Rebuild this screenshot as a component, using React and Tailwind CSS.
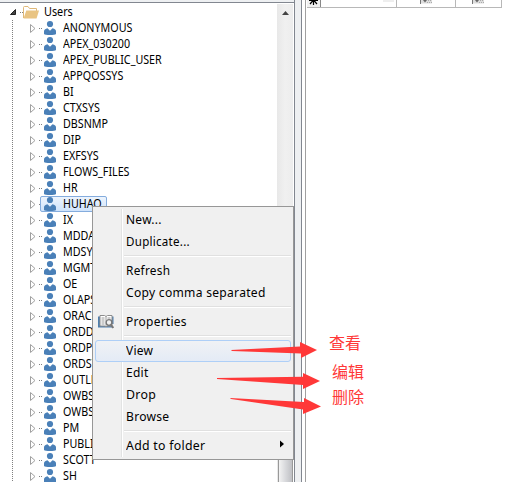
const USERS = [
  'ANONYMOUS', 'APEX_030200', 'APEX_PUBLIC_USER', 'APPQOSSYS', 'BI', 'CTXSYS', 'DBSNMP', 'DIP',
  'EXFSYS', 'FLOWS_FILES', 'HR', 'HUHAO', 'IX', 'MDDATA', 'MDSYS', 'MGMT_VIEW', 'OE', 'OLAPSYS',
  'ORACLE_OCM', 'ORDDATA', 'ORDPLUGINS', 'ORDSYS', 'OUTLN', 'OWBSYS', 'OWBSYS_AUDIT', 'PM',
  'PUBLIC', 'SCOTT', 'SH',
];

const MENU = [
  [['New...', 'scale-x-[.92]'], ['Duplicate...', 'scale-x-[.89]']],
  [['Refresh', 'scale-x-[.91]'], ['Copy comma separated', 'scale-x-[.93]']],
  [['Properties', 'scale-x-[.92]']],
  [['View', 'scale-x-[.92]'], ['Edit', 'scale-x-[.92]'], ['Drop', 'scale-x-[.95]'], ['Browse', 'scale-x-[.93]']],
  [['Add to folder', 'scale-x-[.945]']],
];

function UserIcon() {
  return (
    <svg className="block h-4 w-3 shrink-0" viewBox="0 0 12 16" fill="#4a80b8">
      <circle cx="6" cy="4" r="3.1" />
      <path d="M0 14V11.500Q0 9 3.500 8.300L6 10.800L8.500 8.300Q12 9 12 11.500V14Q11 15 6 15T0 14Z" />
    </svg>
  );
}

function UserRow({ name }) {
  const selected = name === 'HUHAO';
  return (
    <div className="flex h-4 items-center pl-[30px]">
      <svg className="block h-[9px] w-[6px] shrink-0" viewBox="0 0 6 9">
        <path d="M.5.5V8.5L5 4.5Z" fill="#fff" stroke="#a0a0a0" />
      </svg>
      <div className="ml-[3px] h-px w-[3px] shrink-0 bg-[repeating-linear-gradient(90deg,#808080_0_1px,transparent_1px_2px)]" />
      <div
        className={
          selected
            ? '-ml-[2px] flex h-4 w-[67px] items-center rounded-[2px] border border-[#84acdd] bg-linear-to-b from-[#edf4fd] to-[#cfe3fb] pl-[3px]'
            : 'ml-[2px] flex h-4 items-center'
        }
      >
        <UserIcon />
        <span className="ml-[7px] origin-left scale-x-[.893] whitespace-nowrap text-[12px] leading-4">{name}</span>
      </div>
    </div>
  );
}

function BookIcon() {
  return (
    <svg className="block h-[14px] w-4" viewBox="0 0 16 14">
      <path d="M0 1.500H2V11H7L8 12L9 11H13V1.500H15.500V9H14V12.500H0Z" fill="#4f7fae" />
      <path d="M2 .5H6.500L8 1.500L9.500 .5H14V11H9L8 12L7 11H2Z" fill="#fff" stroke="#8c8c8c" />
      <path d="M8 1.500V11M3.500 3H6.500M3.500 5H6.500M3.500 7H6.500M3.500 9H6.500M9.500 3H12.500" stroke="#999" />
      <circle cx="11" cy="7.500" r="2.800" fill="#f2f2f2" stroke="#777" strokeWidth="1.300" />
      <path d="M12.700 9.500L15.300 13" stroke="#777" strokeWidth="2" />
    </svg>
  );
}

function MenuItem({ label, width }) {
  return (
    <div
      className={
        label === 'View'
          ? 'flex h-[22px] items-center rounded-[3px] border border-[#aecff7] bg-linear-to-b from-[#f0f2f5] to-[#e4ebf6] pl-px'
          : 'flex h-[22px] items-center pl-[2px]'
      }
    >
      <div className="w-[29px] shrink-0 pl-[1px]">{label === 'Properties' && <BookIcon />}</div>
      <span className={`-mt-[2px] origin-left whitespace-nowrap text-[13px] leading-5 tracking-[0.3px] ${width}`}>{label}</span>
      {label === 'Add to folder' && (
        <svg className="-mt-[5px] mr-[7px] ml-auto block h-[8px] w-[4px]" viewBox="0 0 4 7">
          <path d="M0 0L4 3.500L0 7Z" />
        </svg>
      )}
    </div>
  );
}

function ContextMenu() {
  return (
    <div className="absolute top-[206px] left-[92px] h-[254px] w-[202px] border border-[#979797] bg-[#f0f0f0] p-[2px] shadow-[1px_0_0_#828790]">
      <div className="absolute top-[2px] left-[28px] h-[248px] w-[2px] border-r border-l border-r-white border-l-[#e2e3e3]" />
      <div className="relative">
        {MENU.map((group, i) => (
          <div key={group[0][0]}>
            {i > 0 && <div className="mt-[2px] mb-[3px] ml-[29px] h-[2px] border-t border-b border-t-[#e0e0e0] border-b-white" />}
            {group.map(([label, width]) => <MenuItem key={label} label={label} width={width} />)}
          </div>
        ))}
      </div>
    </div>
  );
}

function GridHeader() {
  return (
    <div className="flex h-2 w-[195px] border-b border-[#b8b8b8]">
      <div className="w-[14px] border-r border-[#888] bg-[#f0f0f0]">
        <svg className="block h-[7px] w-[13px]" viewBox="0 0 13 7">
          <path d="M2 .5H11M6.500 0V5M6.500 0L3 4M6.500 0L10 4" stroke="#000" strokeWidth="1.200" fill="none" />
        </svg>
      </div>
      <div className="flex w-[76px] justify-end border-r border-[#b8b8b8] pr-[2px]">
        <div className="h-[2px] w-[11px] bg-[#eee]" />
      </div>
      <div className="w-[59px] border-r border-[#b8b8b8] pl-[23px]"><FlagCell /></div>
      <div className="w-[46px] border-r border-[#b8b8b8] pl-[16px]"><FlagCell /></div>
    </div>
  );
}

function FlagCell() {
  return (
    <svg className="block h-1 w-3" viewBox="0 0 12 4">
      <path d="M0 0H12V3.500H0Z" fill="#ddd" />
      <path d="M.5 0V4" stroke="#777" />
      <path d="M3 0H7L5 2.500Z" fill="#666" />
      <path d="M8 .5H12M7 2.500H12" stroke="#aaa" strokeDasharray="1 1" />
    </svg>
  );
}

export default function App() {
  return (
    <div className="relative flex h-[482px] w-[509px] overflow-hidden bg-white font-['Noto_Sans','Noto_Sans_CJK_SC',sans-serif] text-black">
      <div className="flex h-full w-[295px] shrink-0 flex-col border-r border-[#828790]">
        <div className="h-[3px] shrink-0 border-b border-[#828790] bg-[#eef0f2]" />
        <div className="flex min-h-0 flex-1">
          <div className="w-[277px] shrink-0 pt-px">
            <div className="flex h-4 items-center pl-[10px]">
              <svg className="block h-[6px] w-[6px]" viewBox="0 0 6 6"><path d="M5.500 .5V5.500H.5Z" fill="#444" stroke="#222" /></svg>
              <div className="ml-[4px] h-px w-[3px] bg-[repeating-linear-gradient(90deg,#808080_0_1px,transparent_1px_2px)]" />
              <svg className="block h-[13px] w-4" viewBox="0 0 16 13">
                <path d="M.5 12V1.500Q.5 .5 1.500 .5H5L6.500 2.500H13.500V5" fill="#fff" stroke="#dfb878" />
                <path d="M3.300 4.500H16L13.500 12.500H.5Z" fill="#e9c483" />
              </svg>
              <span className="ml-[5px] origin-left scale-x-[.9] text-[12px] leading-4">Users</span>
            </div>
            <div className="relative">
              <div className="absolute top-0 left-[12px] h-[462px] w-px bg-[repeating-linear-gradient(#808080_0_1px,transparent_1px_2px)]" />
              {USERS.map((name) => <UserRow key={name} name={name} />)}
            </div>
          </div>
          <div className="mt-px flex w-4 flex-col items-center bg-linear-to-r from-[#e8e8e8] via-[#f0f0f0] to-[#ededed]">
            <svg className="mt-[7px] block h-[4px] w-[7px]" viewBox="0 0 7 4"><path d="M3.500 0L7 4H0Z" fill="#444" /></svg>
            <div className="mt-[420px] -mb-1 w-[15px] flex-1 border border-[#999] bg-linear-to-r from-[#f3f3f3] via-[#d8d9dc] to-[#bfc0c4]" />
          </div>
        </div>
      </div>
      <div className="w-[7px] shrink-0 border-r border-[#828790] bg-[#eef0f2]" />
      <div className="ml-[3px] h-full flex-1 border-l border-[#a0a0a0] pl-px">
        <GridHeader />
      </div>

      <ContextMenu />

      <svg className="absolute top-[335px] left-[210px] h-[85px] w-[115px]" viewBox="210 335 115 85" fill="#ff3838">
        <path d="M231 350L300 346.500V342L317 350L301 358V353.500L232 351Z" />
        <path d="M217 378L303 376.800V373L320 381L303 389V385L217 379Z" />
        <path d="M230 398L304 402V398L321 406.500L303 414V409.500L231 399Z" />
      </svg>
      <div className="absolute top-[331px] left-[329px] text-[16px] leading-6 text-[#ff3838]">查看</div>
      <div className="absolute top-[360px] left-[332px] text-[16px] leading-6 text-[#ff3838]">编辑</div>
      <div className="absolute top-[385px] left-[332px] text-[16px] leading-6 text-[#ff3838]">删除</div>
    </div>
  );
}
